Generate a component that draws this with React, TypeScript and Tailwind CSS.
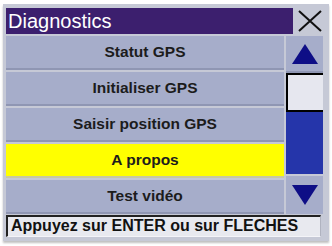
const items = ["Statut GPS", "Initialiser GPS", "Saisir position GPS", "A propos", "Test vidéo"];
const SELECTED = 3;

function Triangle({ down }: { down?: boolean }) {
  return (
    <svg width="26" height="20" viewBox="0 0 26 20">
      <polygon points={down ? "0,0 26,0 13,20" : "13,0 26,20 0,20"} fill="#0e0e86" />
    </svg>
  );
}

export default function App() {
  return (
    <div className="w-[332px] h-[246px] bg-white" style={{ fontFamily: '"Liberation Sans", Arial, sans-serif' }}>
      <div className="ml-[3px] mt-[4px] w-[326px] h-[237px] bg-[#c6c9d6] pl-[3px] pt-[4px] pr-[3px] flex flex-col shadow-[0_2px_2px_rgba(0,0,0,0.25)]">
        {/* Title bar */}
        <div className="flex h-[26px]">
          <div className="w-[287px] bg-[#3c1f6e] text-white text-[20px] leading-[26px] pl-[2px]">Diagnostics</div>
          <div className="flex-1 flex items-center justify-center">
            <svg width="24" height="22" viewBox="0 0 24 22">
              <path d="M1 1 L23 21 M23 1 L1 21" stroke="#111" strokeWidth="2" />
            </svg>
          </div>
        </div>

        {/* Body */}
        <div className="flex mt-[2px] h-[178px]">
          <div className="w-[278px] flex flex-col gap-[2px]">
            {items.map((label, i) => (
              <div
                key={label}
                className={
                  "h-[34px] flex items-center justify-center text-[15.5px] font-bold text-[#1c1c1c] border-b-2 " +
                  (i === SELECTED ? "bg-[#ffff00] border-[#c8c9a0]" : "bg-[#a6adca] border-[#8f96b3]")
                }
              >
                {label}
              </div>
            ))}
          </div>
          <div className="ml-[2px] w-[37px] flex flex-col">
            <div className="h-[37px] bg-[#a6adca] border-b-2 border-[#8f96b3] flex items-center justify-center">
              <Triangle />
            </div>
            <div className="h-[39px] bg-[#e6e7ef] border-2 border-r-0 border-black"></div>
            <div className="h-[62px] bg-[#2535aa]"></div>
            <div className="flex-1 mt-[2px] bg-[#a6adca] flex items-center justify-center">
              <Triangle down />
            </div>
          </div>
        </div>

        {/* Status */}
        <div className="mt-[1px] mr-[5px] h-[22px] bg-[#e8e9ef] border-t-2 border-l-2 border-b border-r border-t-[#222] border-l-[#222] border-b-[#f4f4f8] border-r-[#b0b3c0] text-[16px] font-bold leading-[18px] pl-[3px] text-[#111]">
          Appuyez sur ENTER ou sur FLECHES
        </div>
      </div>
    </div>
  );
}
